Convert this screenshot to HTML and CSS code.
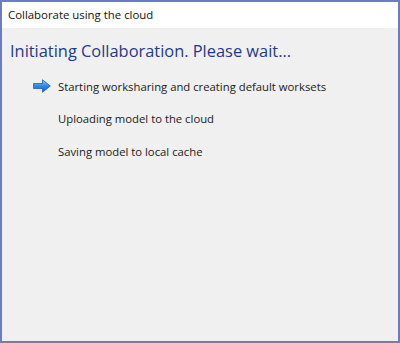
FILE: index.html
```html
<!DOCTYPE html>
<html lang="en">
<head>
    <meta charset="UTF-8">
    <title>Collaborate using the cloud</title>
    <link rel="stylesheet" href="styles.css">
</head>
<body>
    <div class="window">
        <div class="title-bar">Collaborate using the cloud</div>
        <div class="content">
            <h1>Initiating Collaboration. Please wait...</h1>
            <ul class="steps">
                <li class="step current">
                    <span class="marker">
                        <svg width="18" height="14" viewBox="0 0 18 14">
                            <defs>
                                <linearGradient id="arrowFill" x1="0" y1="0" x2="0" y2="1">
                                    <stop offset="0" stop-color="#8cc4ff"/>
                                    <stop offset="0.5" stop-color="#2f86f0"/>
                                    <stop offset="1" stop-color="#1260c8"/>
                                </linearGradient>
                            </defs>
                            <path d="M0.5 4.5 H9.5 V0.8 L17.3 7 L9.5 13.2 V9.5 H0.5 Z" fill="url(#arrowFill)" stroke="#1d5fb8" stroke-width="0.8" stroke-linejoin="round"/>
                        </svg>
                    </span>
                    Starting worksharing and creating default worksets
                </li>
                <li class="step"><span class="marker"></span>Uploading model to the cloud</li>
                <li class="step"><span class="marker"></span>Saving model to local cache</li>
            </ul>
        </div>
    </div>
</body>
</html>
```

FILE: styles.css
```css
html, body {
    margin: 0;
    height: 100%;
}
body {
    font-family: "Open Sans", "Noto Sans", sans-serif;
    color: #1a1a1a;
}
.window {
    box-sizing: border-box;
    height: 343px;
    border: 2px solid #6b7bc6;
    background-color: #f0f0f0;
    display: flex;
    flex-direction: column;
}
.title-bar {
    height: 26px;
    background-color: #ffffff;
    font-size: 11.4px;
    line-height: 26px;
    padding-left: 6px;
    color: #111;
}
.content {
    padding: 12px 8px 0 8px;
}
h1 {
    margin: 0;
    font-size: 16.4px;
    font-weight: normal;
    color: #1e3a8a;
    line-height: 22px;
}
.steps {
    list-style: none;
    margin: 8px 0 0 0;
    padding: 0;
}
.step {
    display: flex;
    align-items: center;
    height: 32.5px;
    font-size: 11.3px;
}
.marker {
    width: 48px;
    padding-left: 23px;
    box-sizing: border-box;
    display: flex;
    align-items: center;
}
.marker svg { display: block; }
```
